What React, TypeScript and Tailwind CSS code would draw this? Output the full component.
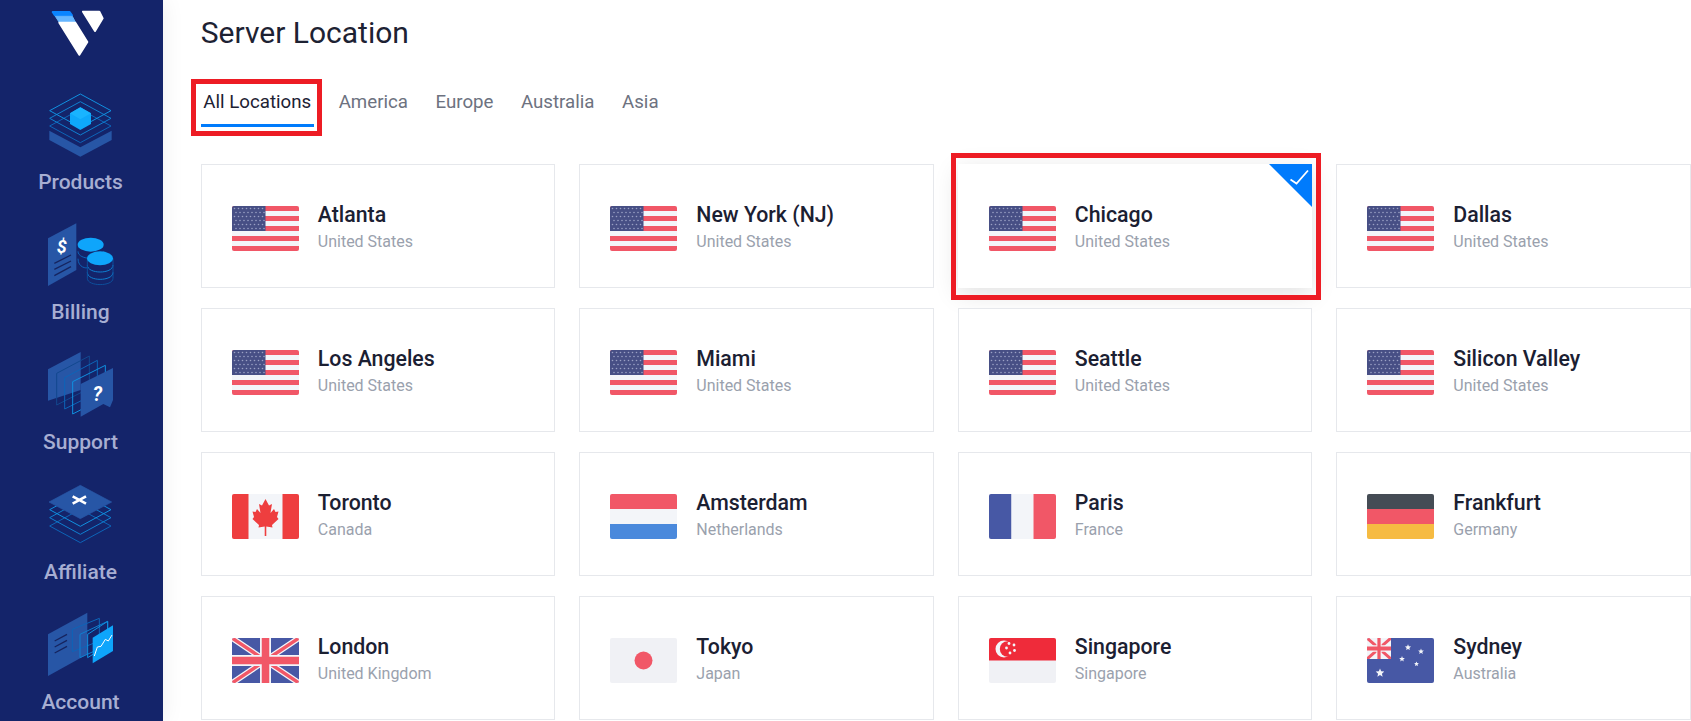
import type { ReactNode } from "react";

const RED = "#f15767";
const PALE = "#f3f5f9";
const NAVY = "#4758a5";

const FlagBox = ({ children }: { children: ReactNode }) => (
  <svg viewBox="0 0 67 45" className="w-[67px] h-[45px] shrink-0 rounded-[2px]">
    {children}
  </svg>
);

const UnionJack = () => (
  <>
    <rect width="67" height="45" fill={NAVY} />
    <path d="M0 0L67 45M67 0L0 45" stroke={PALE} strokeWidth="6" />
    <path d="M0 0L67 45M67 0L0 45" stroke={RED} strokeWidth="3.5" />
    <path d="M33.5 0V45M0 22.5H67" stroke={PALE} strokeWidth="11" />
    <path d="M33.5 0V45M0 22.5H67" stroke={RED} strokeWidth="7.5" />
  </>
);

const Star = ({ x, y, r }: { x: number; y: number; r: number }) => {
  const pts = Array.from({ length: 10 }, (_, i) => {
    const rad = i % 2 ? r * 0.45 : r;
    const a = (Math.PI / 5) * i - Math.PI / 2;
    return `${x + rad * Math.cos(a)},${y + rad * Math.sin(a)}`;
  }).join(" ");
  return <polygon points={pts} fill="#f3f5f9" />;
};

const UsFlag = () => {
  const dots = [];
  for (let row = 0; row < 6; row++) {
    for (let col = 0; col < 8; col++) {
      dots.push(
        <circle key={`${row}-${col}`} cx={2.5 + col * 4 + (row % 2 ? 1.5 : 0)} cy={2.5 + row * 4} r="0.8" fill="#9aa0c4" />
      );
    }
  }
  return (
    <FlagBox>
      <rect width="67" height="45" fill={PALE} />
      {[0, 10, 20, 30, 40].map((y) => (
        <rect key={y} y={y} width="67" height="5" fill={RED} />
      ))}
      <rect width="33.5" height="25" fill="#474f85" />
      {dots}
    </FlagBox>
  );
};

const CanadaFlag = () => (
  <FlagBox>
    <rect width="67" height="45" fill={PALE} />
    <rect width="16.5" height="45" fill="#ee3e3f" />
    <rect x="50.5" width="16.5" height="45" fill="#ee3e3f" />
    <path
      d="M33.5 5L37 11.5L40 10L38.5 19L42 15L43.5 18L46.5 17.5L45 23L46.5 25L40 31L40.5 33.5L34.3 32.5V42H32.7V32.5L26.5 33.5L27 31L20.5 25L22 23L20.5 17.5L23.5 18L25 15L28.5 19L27 10L30 11.5Z"
      fill="#ee3e3f"
    />
  </FlagBox>
);

const NetherlandsFlag = () => (
  <FlagBox>
    <rect width="67" height="15" fill={RED} />
    <rect y="15" width="67" height="15" fill={PALE} />
    <rect y="30" width="67" height="15" fill="#4a89dc" />
  </FlagBox>
);

const FranceFlag = () => (
  <FlagBox>
    <rect width="22.5" height="45" fill={NAVY} />
    <rect x="22.5" width="22" height="45" fill={PALE} />
    <rect x="44.5" width="22.5" height="45" fill={RED} />
  </FlagBox>
);

const GermanyFlag = () => (
  <FlagBox>
    <rect width="67" height="15" fill="#454c55" />
    <rect y="15" width="67" height="15" fill={RED} />
    <rect y="30" width="67" height="15" fill="#f6bb42" />
  </FlagBox>
);

const UkFlag = () => (
  <FlagBox>
    <UnionJack />
  </FlagBox>
);

const JapanFlag = () => (
  <FlagBox>
    <rect width="67" height="45" fill="#f0f1f5" />
    <circle cx="33.5" cy="22.5" r="9" fill={RED} />
  </FlagBox>
);

const SingaporeFlag = () => (
  <FlagBox>
    <rect width="67" height="45" fill="#f0f1f5" />
    <rect width="67" height="22.5" fill="#ef2b3a" />
    <circle cx="15" cy="11" r="8.5" fill={PALE} />
    <circle cx="18.5" cy="11" r="7.7" fill="#ef2b3a" />
    {[
      [20, 5.5],
      [25, 7],
      [17.5, 10],
      [25.5, 12.5],
      [21, 15],
    ].map(([x, y]) => (
      <circle key={x * y} cx={x} cy={y} r="1.4" fill={PALE} />
    ))}
  </FlagBox>
);

const AustraliaFlag = () => (
  <FlagBox>
    <rect width="67" height="45" fill={NAVY} />
    <svg x="0" y="0" width="24" height="21" viewBox="0 0 67 45" preserveAspectRatio="none">
      <rect width="67" height="45" fill={PALE} />
      <path d="M0 0L67 45M67 0L0 45" stroke={RED} strokeWidth="7" />
      <path d="M33.5 0V45M0 22.5H67" stroke={PALE} strokeWidth="14" />
      <path d="M33.5 0V45M0 22.5H67" stroke={RED} strokeWidth="9" />
    </svg>
    <Star x={13} y={35} r={4.5} />
    <Star x={41} y={9.5} r={3.2} />
    <Star x={54} y={13.5} r={3} />
    <Star x={35} y={21} r={3} />
    <Star x={49.5} y={26} r={2.6} />
  </FlagBox>
);

const locations = [
  { name: "Atlanta", country: "United States", flag: <UsFlag /> },
  { name: "New York (NJ)", country: "United States", flag: <UsFlag /> },
  { name: "Chicago", country: "United States", flag: <UsFlag />, selected: true },
  { name: "Dallas", country: "United States", flag: <UsFlag /> },
  { name: "Los Angeles", country: "United States", flag: <UsFlag /> },
  { name: "Miami", country: "United States", flag: <UsFlag /> },
  { name: "Seattle", country: "United States", flag: <UsFlag /> },
  { name: "Silicon Valley", country: "United States", flag: <UsFlag /> },
  { name: "Toronto", country: "Canada", flag: <CanadaFlag /> },
  { name: "Amsterdam", country: "Netherlands", flag: <NetherlandsFlag /> },
  { name: "Paris", country: "France", flag: <FranceFlag /> },
  { name: "Frankfurt", country: "Germany", flag: <GermanyFlag /> },
  { name: "London", country: "United Kingdom", flag: <UkFlag /> },
  { name: "Tokyo", country: "Japan", flag: <JapanFlag /> },
  { name: "Singapore", country: "Singapore", flag: <SingaporeFlag /> },
  { name: "Sydney", country: "Australia", flag: <AustraliaFlag /> },
];

const Logo = () => (
  <svg viewBox="144 27 180 144" className="w-[60px] h-[48px] overflow-visible">
    <path d="M158 36H209L216 46H165Z" fill="#0a84ff" stroke="#0a84ff" strokeWidth="6" strokeLinejoin="round" />
    <path d="M166 49H217L226 66H177Z" fill="#66b6ff" stroke="#66b6ff" strokeWidth="3" strokeLinejoin="round" />
    <path d="M178 68H226L262 126L238 164Z" fill="#fff" stroke="#fff" strokeWidth="6" strokeLinejoin="round" />
    <path d="M249 35H298L308 55L285 93Z" fill="#fff" stroke="#fff" strokeWidth="6" strokeLinejoin="round" />
  </svg>
);

const diamond = (cy: number, hw = 92, hh = 50, cx = 241) =>
  `M${cx} ${cy - hh}L${cx + hw} ${cy}L${cx} ${cy + hh}L${cx - hw} ${cy}Z`;

const ProductsIcon = () => (
  <svg viewBox="144 279 195 195" className="w-[65px] h-[65px] overflow-visible" fill="none">
    <path d="M148 392L241 442L335 392V420L241 470L148 420Z" fill="#2756a6" />
    <path d={diamond(378)} stroke="#0d64b8" strokeWidth="3" strokeLinejoin="round" />
    <path d={diamond(355)} stroke="#0f7fd0" strokeWidth="3" strokeLinejoin="round" />
    <path d={diamond(332)} stroke="#1090e0" strokeWidth="3" strokeLinejoin="round" />
    <path d="M241 322L273 340V372L241 390L210 372V340Z" fill="#0ea8fb" />
    <path d="M241 322L273 340L241 358L210 340Z" fill="#19b4ff" />
  </svg>
);

const BillingIcon = () => (
  <svg viewBox="144 39 195 195" className="w-[65px] h-[65px] overflow-visible" fill="none">
    <path d="M144 85L229 40V180L144 228Z" fill="#2756a6" />
    <text x="185" y="128" fontSize="54" fontWeight="700" fontStyle="italic" textAnchor="middle" fill="#fff">
      $
    </text>
    <path d="M163 160L213 135M163 178L213 153M163 197L213 170" stroke="#16245f" strokeWidth="4" />
    <path d="M234 124C234 152 310 152 310 124M234 146C234 174 262 176 262 172" stroke="#0d64b8" strokeWidth="3" />
    <ellipse cx="272" cy="104" rx="39" ry="21" fill="#0ea5fb" />
    <path d="M262 165C262 193 339 193 339 165M262 187C262 215 339 215 339 187" stroke="#0f7fd0" strokeWidth="3" />
    <path d="M262 145V205C262 230 339 230 339 205V145" stroke="#0d4f9c" strokeWidth="3" />
    <ellipse cx="300" cy="145" rx="39" ry="21" fill="#0ea5fb" />
  </svg>
);

const SupportIcon = () => (
  <svg viewBox="144 429 195 195" className="w-[65px] h-[65px] overflow-visible" fill="none">
    <path d="M144 478L242 426V540L144 572Z" fill="#2756a6" />
    <path d="M170 490L268 438V535L170 585Z" stroke="#12488f" strokeWidth="3" strokeLinejoin="round" />
    <path d="M194 503L292 451V548L194 597Z" stroke="#0d64b8" strokeWidth="3" strokeLinejoin="round" />
    <path d="M218 515L316 466V562L218 612Z" stroke="#1090e0" strokeWidth="3" strokeLinejoin="round" />
    <path d="M242 522L339 474V570L330 592L310 582L242 620Z" fill="#2756a6" />
    <text x="292" y="574" fontSize="58" fontWeight="700" fontStyle="italic" textAnchor="middle" fill="#fff">
      ?
    </text>
  </svg>
);

const AffiliateIcon = () => (
  <svg viewBox="144 66 195 195" className="w-[65px] h-[65px] overflow-visible" fill="none">
    <path d={diamond(195)} stroke="#0d64b8" strokeWidth="3" strokeLinejoin="round" />
    <path d={diamond(170)} stroke="#0f7fd0" strokeWidth="3" strokeLinejoin="round" />
    <path d={diamond(146)} stroke="#1090e0" strokeWidth="3" strokeLinejoin="round" />
    <path d={diamond(123, 94, 50)} fill="#2756a6" stroke="#2756a6" strokeWidth="2" strokeLinejoin="round" />
    <path d="M218 106L258 128M258 106L218 128" stroke="#fff" strokeWidth="8" />
  </svg>
);

const AccountIcon = () => (
  <svg viewBox="144 456 195 195" className="w-[65px] h-[65px] overflow-visible" fill="none">
    <path d="M144 520L262 455V580L144 645Z" fill="#2756a6" />
    <path d="M164 540L201 520M164 558L201 538M164 576L201 556" stroke="#16245f" strokeWidth="4" />
    <path d="M217 505L298 472V540L217 572Z" stroke="#0d64b8" strokeWidth="3" strokeLinejoin="round" />
    <path d="M240 520L323 481V552L240 590Z" stroke="#0f7fd0" strokeWidth="3" strokeLinejoin="round" />
    <path d="M263 520L323 481V552L263 590Z" stroke="#1090e0" strokeWidth="3" strokeLinejoin="round" />
    <path d="M278 530L339 493V570L278 607Z" fill="#0ea5fb" />
    <path d="M283 585L292 558L303 556L316 535L325 540L336 522" stroke="#fff" strokeWidth="3" strokeLinejoin="round" />
  </svg>
);

const navItems = [
  { label: "Products", icon: <ProductsIcon /> },
  { label: "Billing", icon: <BillingIcon /> },
  { label: "Support", icon: <SupportIcon /> },
  { label: "Affiliate", icon: <AffiliateIcon /> },
  { label: "Account", icon: <AccountIcon /> },
];

const tabs = ["All Locations", "America", "Europe", "Australia", "Asia"];

const Sidebar = () => (
  <aside className="relative z-10 w-[163px] h-screen shrink-0 overflow-hidden bg-[#14246a] flex flex-col items-center pr-[2px] shadow-[0_0_22px_rgba(0,0,0,0.07)]">
    <div className="h-[93px] w-full shrink-0 pt-[9px] pl-[48px]">
      <Logo />
    </div>
    {navItems.map((item) => (
      <div key={item.label} className="h-[130px] shrink-0 flex flex-col items-center">
        {item.icon}
        <span className="mt-3 text-[21px] leading-6 font-medium text-[#a7aed2]">{item.label}</span>
      </div>
    ))}
  </aside>
);

const LocationCard = ({ name, country, flag, selected }: (typeof locations)[number]) => (
  <div
    className={`relative h-[124px] flex items-center gap-[19px] pl-[30px] pt-[5px] bg-white border ${
      selected ? "border-white shadow-[0_6px_24px_rgba(0,0,0,0.12)]" : "border-[#e6e8ec]"
    }`}
  >
    {flag}
    <div className="flex flex-col">
      <span className="text-[21.3px] leading-6 font-medium text-[#1b2032] mb-[3px]">{name}</span>
      <span className="text-[16px] leading-6 text-[#9aa1ad]">{country}</span>
    </div>
    {selected && (
      <>
        <svg viewBox="0 0 43 43" className="absolute -top-px -right-px w-[43px] h-[43px]">
          <path d="M0 0H43V43Z" fill="#007bfc" />
          <path d="M21.5 15.5L27.5 19.5L39 6.5" fill="none" stroke="#fff" strokeWidth="1.8" />
        </svg>
        <div className="absolute -top-[12px] -left-[8px] -right-[10px] -bottom-[13px] border-[5px] border-[#ed1c24] pointer-events-none" />
      </>
    )}
  </div>
);

export default function App() {
  return (
    <div className="flex h-screen w-full overflow-hidden bg-white [font-family:Roboto,sans-serif]">
      <Sidebar />
      <main className="flex-1 min-w-0 pl-[37.8px] pt-[13px]">
        <h1 className="text-[30px] leading-10 font-normal text-[#1d2233]">Server Location</h1>

        <div className="mt-[36px] flex gap-[22.5px]">
          {tabs.map((tab, i) => (
            <div
              key={tab}
              className={`relative px-[2.5px] pt-px pb-[10px] text-[18.7px] leading-6 border-b-[3px] ${
                i === 0 ? "text-[#1d2233] border-[#007bfc]" : "text-[#6d7280] border-transparent"
              }`}
            >
              {tab}
              {i === 0 && (
                <div className="absolute -top-[10px] -left-[10px] -right-[8px] -bottom-[12px] border-[5px] border-[#ed1c24] pointer-events-none" />
              )}
            </div>
          ))}
        </div>

        <div className="mt-[37px] grid grid-cols-[repeat(4,354.5px)] gap-x-[24px] gap-y-[20px]">
          {locations.map((location) => (
            <LocationCard key={location.name} {...location} />
          ))}
        </div>
      </main>
    </div>
  );
}
